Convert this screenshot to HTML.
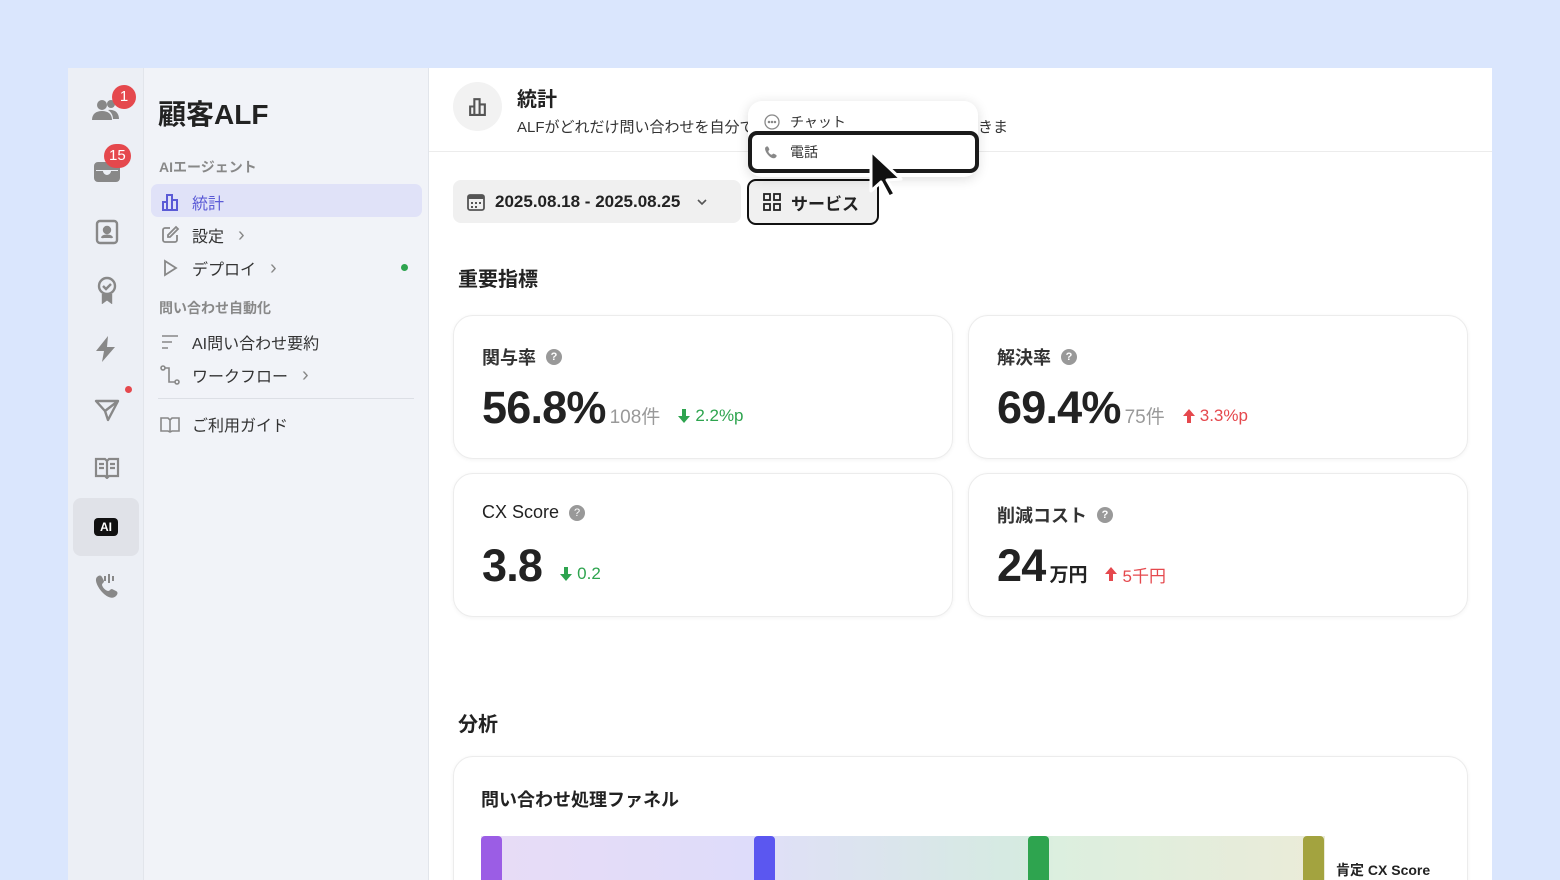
<!DOCTYPE html>
<html><head><meta charset="utf-8"><style>
*{box-sizing:border-box;margin:0;padding:0}
body{width:1560px;height:880px;background:#dae6fd;font-family:"Liberation Sans","Noto Sans CJK JP",sans-serif;color:#222;position:relative;overflow:hidden}
.abs{position:absolute}
.win{left:68px;top:68px;width:1424px;height:812px;background:#fff;overflow:hidden}
.rail{left:0;top:0;width:76px;height:812px;background:#eceff5;border-right:1px solid #e2e5eb}
.side{left:76px;top:0;width:285px;height:812px;background:#f1f3f8;border-right:1px solid #e2e5eb}
.badge{background:#e5484d;color:#fff;font-size:15px;border-radius:12px;height:24px;min-width:24px;text-align:center;line-height:24px;padding:0 5px}
.nav{position:absolute;left:16px;font-size:16px;color:#333;display:flex;align-items:center;gap:12px}
.chev{color:#888;font-size:20px;margin-left:2px;line-height:16px}
.sec{position:absolute;left:15px;font-size:14px;color:#888;font-weight:bold}
.card{position:absolute;background:#fff;border:1px solid #ececec;border-radius:20px;box-shadow:0 1px 4px rgba(0,0,0,.05)}
.lbl{position:absolute;left:28px;top:28px;font-size:18px;font-weight:bold;color:#333;display:flex;align-items:center;gap:10px}
.q{width:16px;height:16px;border-radius:50%;background:#999;color:#fff;font-size:11px;text-align:center;line-height:16px}
.val{position:absolute;left:28px;top:66px;display:flex;align-items:baseline;white-space:nowrap}
.big{font-size:45px;font-weight:bold;color:#222;letter-spacing:-0.8px}
.sub{font-size:19px;color:#999;margin-left:4px}
.g{color:#2ea44f;font-size:17px;margin-left:18px;display:flex;align-items:center;gap:5px}
.r{color:#e5484d;font-size:17px;margin-left:18px;display:flex;align-items:center;gap:5px}
</style></head><body>
<div class="abs win">
 <div class="abs rail">
  <svg class="abs" style="left:24px;top:30px" width="28" height="24" viewBox="0 0 28 24" fill="#888"><circle cx="10" cy="7" r="5"/><path d="M0 22c0-6 4-9 10-9s10 3 10 9z"/><circle cx="19" cy="6" r="4"/><path d="M16 12c6-1 11 2 11 9h-6c0-4-2-7-5-9z"/></svg>
  <div class="abs badge" style="left:44px;top:17px">1</div>
  <svg class="abs" style="left:26px;top:92px" width="26" height="22" viewBox="0 0 26 22" fill="#888"><path d="M4 2h18a4 4 0 0 1 4 4v12a4 4 0 0 1-4 4H4a4 4 0 0 1-4-4V6a4 4 0 0 1 4-4zM2 11h7c0 2 2 4 4 4s4-2 4-4h7v-1H2z"/></svg>
  <div class="abs badge" style="left:36px;top:76px">15</div>
  <svg class="abs" style="left:27px;top:151px" width="24" height="26" viewBox="0 0 24 26" fill="none" stroke="#888" stroke-width="2.4"><rect x="2" y="2" width="20" height="22" rx="3"/><circle cx="12" cy="11" r="3" fill="#888"/><path d="M7 19c1-3 9-3 10 0" fill="#888"/></svg>
  <svg class="abs" style="left:27px;top:208px" width="24" height="28" viewBox="0 0 24 28" fill="none" stroke="#888" stroke-width="2.4"><circle cx="12" cy="10" r="8"/><path d="M8 10l3 3 5-5"/><path d="M8 18v8l4-3 4 3v-8" fill="#888"/></svg>
  <svg class="abs" style="left:28px;top:268px" width="20" height="26" viewBox="0 0 20 26" fill="#888"><path d="M12 0L0 15h8l-2 11 13-15h-8z"/></svg>
  <div class="abs" style="left:57px;top:318px;width:7px;height:7px;border-radius:50%;background:#e5484d"></div>
  <svg class="abs" style="left:26px;top:330px" width="26" height="24" viewBox="0 0 26 24" fill="none" stroke="#888" stroke-width="2.4" stroke-linejoin="round"><path d="M2 3l22 0-10 19-3-9z M11 13l13-10"/></svg>
  <svg class="abs" style="left:26px;top:389px" width="26" height="22" viewBox="0 0 26 22" fill="none" stroke="#888" stroke-width="2.2"><path d="M2 2h9l2 2 2-2h9v17h-9l-2 2-2-2H2z M13 4v17 M5 7h5M5 11h5M16 7h5M16 11h5"/></svg>
  <div class="abs" style="left:5px;top:430px;width:66px;height:58px;border-radius:8px;background:#e0e2e8"></div>
  <div class="abs" style="left:26px;top:450px;width:24px;height:18px;border-radius:4px;background:#111;color:#fff;font-size:12px;font-weight:bold;text-align:center;line-height:18px">AI</div>
  <svg class="abs" style="left:26px;top:505px" width="26" height="26" viewBox="0 0 26 26" fill="#888"><path d="M3 4c2-2 4-2 5 0l2 4c0 2-2 2-2 4 1 3 3 5 6 6 2 0 2-2 4-2l4 2c2 1 2 3 0 5-3 3-8 2-13-3S0 7 3 4z"/><rect x="14" y="1" width="2" height="9"/><rect x="18" y="3" width="2" height="5"/><rect x="10" y="3" width="2" height="5"/></svg>
 </div>
 <div class="abs side">
  <div class="abs" style="left:14px;top:25px;font-size:28px;font-weight:bold;color:#222">顧客ALF</div>
  <div class="sec" style="top:89px">AIエージェント</div>
  <div class="abs" style="left:7px;top:116px;width:271px;height:33px;border-radius:7px;background:#e0e2f8"></div>
  <div class="nav" style="top:122px;color:#5b5bd6"><svg width="20" height="20" viewBox="0 0 20 20" fill="none" stroke="#5b5bd6" stroke-width="2"><path d="M2 18h16M3 18v-8h4v8M7 18V3h5v15M12 18V8h5v10"/></svg>統計</div>
  <div class="nav" style="top:155px"><svg width="20" height="20" viewBox="0 0 20 20" fill="none" stroke="#888" stroke-width="1.8"><path d="M10 3H5a2 2 0 0 0-2 2v10a2 2 0 0 0 2 2h10a2 2 0 0 0 2-2v-5"/><path d="M16 2l2 2-8 8H8v-2z"/></svg>設定<span class="chev">›</span></div>
  <div class="nav" style="top:188px"><svg width="20" height="20" viewBox="0 0 20 20" fill="none" stroke="#888" stroke-width="1.8"><path d="M5 3l11 7-11 7z"/></svg>デプロイ<span class="chev">›</span></div>
  <div class="abs" style="left:257px;top:196px;width:7px;height:7px;border-radius:50%;background:#2ea44f"></div>
  <div class="sec" style="top:230px">問い合わせ自動化</div>
  <div class="nav" style="top:262px"><svg width="20" height="20" viewBox="0 0 20 20" stroke="#888" stroke-width="1.6"><path d="M2 4h16M2 10h10M2 16h6"/></svg>AI問い合わせ要約</div>
  <div class="nav" style="top:295px"><svg width="20" height="20" viewBox="0 0 20 20" fill="none" stroke="#888" stroke-width="1.6"><circle cx="3" cy="3" r="2"/><circle cx="17" cy="17" r="2"/><path d="M5 3h4v14h6"/></svg>ワークフロー<span class="chev">›</span></div>
  <div class="abs" style="left:14px;top:330px;width:256px;height:1px;background:#dcdfe5"></div>
  <div class="nav" style="top:344px"><svg width="20" height="20" viewBox="0 0 20 20" fill="none" stroke="#888" stroke-width="1.6"><path d="M1 4h7l2 2 2-2h7v13h-7l-2 1-2-1H1z M10 6v12"/></svg>ご利用ガイド</div>
 </div>
 <div class="abs" style="left:385px;top:14px;width:49px;height:49px;border-radius:50%;background:#f2f2f2"></div>
 <svg class="abs" style="left:399px;top:28px" width="21" height="21" viewBox="0 0 20 20" fill="none" stroke="#555" stroke-width="2"><path d="M2 18h16M3 18v-8h4v8M7 18V3h5v15M12 18V8h5v10"/></svg>
 <div class="abs" style="left:449px;top:15px;font-size:20px;font-weight:bold">統計</div>
 <div class="abs" style="left:449px;top:48px;font-size:15px;color:#333">ALFがどれだけ問い合わせを自分で解決したか</div>
 <div class="abs" style="left:910px;top:48px;font-size:15px;color:#333">きま</div>
 <div class="abs" style="left:361px;top:83px;width:1063px;height:1px;background:#ececec"></div>
 <div class="abs" style="left:385px;top:112px;width:288px;height:43px;border-radius:8px;background:#f0f0f0;display:flex;align-items:center;padding-left:14px;gap:10px;font-size:17px;font-weight:bold"><svg width="18" height="18" viewBox="0 0 18 18"><rect x="1" y="2" width="16" height="15" rx="2" fill="none" stroke="#555" stroke-width="1.8"/><rect x="1" y="2" width="16" height="4" fill="#555"/><g fill="#555"><rect x="4" y="9" width="2" height="2"/><rect x="8" y="9" width="2" height="2"/><rect x="12" y="9" width="2" height="2"/><rect x="4" y="13" width="2" height="2"/><rect x="8" y="13" width="2" height="2"/></g></svg>2025.08.18 - 2025.08.25 <svg style="margin-left:6px" width="12" height="8" viewBox="0 0 12 8" fill="none" stroke="#555" stroke-width="1.6"><path d="M2 2l4 4 4-4"/></svg></div>
 <div class="abs" style="left:679px;top:111px;width:132px;height:46px;border-radius:9px;background:#f0f0f0;border:2px solid #111;display:flex;align-items:center;padding-left:14px;gap:10px;font-size:17px;font-weight:bold"><svg width="18" height="18" viewBox="0 0 18 18" fill="none" stroke="#222" stroke-width="1.8"><rect x="1" y="1" width="6" height="6"/><rect x="11" y="1" width="6" height="6"/><rect x="1" y="11" width="6" height="6"/><rect x="11" y="11" width="6" height="6"/></svg>サービス</div>
 <div class="abs" style="left:680px;top:33px;width:230px;height:76px;background:#fff;border-radius:14px;box-shadow:0 2px 12px rgba(0,0,0,.14)"></div>
 <div class="abs" style="left:696px;top:44px;font-size:14px;color:#333;display:flex;align-items:center;gap:10px"><svg width="16" height="16" viewBox="0 0 16 16" fill="none" stroke="#888" stroke-width="1.3"><circle cx="8" cy="8" r="7"/><circle cx="5" cy="8" r=".6" fill="#888"/><circle cx="8" cy="8" r=".6" fill="#888"/><circle cx="11" cy="8" r=".6" fill="#888"/></svg>チャット</div>
 <div class="abs" style="left:680px;top:63px;width:231px;height:42px;border:4px solid #1a1a1a;border-radius:9px;background:#fff"></div>
 <div class="abs" style="left:696px;top:74px;font-size:14px;color:#333;display:flex;align-items:center;gap:12px"><svg width="14" height="14" viewBox="0 0 26 26" fill="#888"><path d="M3 4c2-2 4-2 5 0l2 4c0 2-2 2-2 4 1 3 3 5 6 6 2 0 2-2 4-2l4 2c2 1 2 3 0 5-3 3-8 2-13-3S0 7 3 4z"/></svg>電話</div>
 <svg class="abs" style="left:800px;top:80px" width="40" height="52" viewBox="0 0 40 52"><path d="M3 3v40l10-9 8 15 6-3-8-14 14-1z" fill="#111" stroke="#fff" stroke-width="3" stroke-linejoin="round"/></svg>
 <div class="abs" style="left:390px;top:195px;font-size:20px;font-weight:bold">重要指標</div>
 <div class="card" style="left:385px;top:247px;width:500px;height:144px"><div class="lbl">関与率<span class="q">?</span></div><div class="val"><span class="big">56.8%</span><span class="sub">108件</span><span class="g"><svg width="12" height="14" viewBox="0 0 12 14" fill="#2ea44f"><path d="M4 0h4v7h4l-6 7-6-7h4z"/></svg>2.2%p</span></div></div>
 <div class="card" style="left:900px;top:247px;width:500px;height:144px"><div class="lbl">解決率<span class="q">?</span></div><div class="val"><span class="big">69.4%</span><span class="sub">75件</span><span class="r"><svg width="12" height="14" viewBox="0 0 12 14" fill="#e5484d"><path d="M4 14h4V7h4L6 0 0 7h4z"/></svg>3.3%p</span></div></div>
 <div class="card" style="left:385px;top:405px;width:500px;height:144px"><div class="lbl" style="font-weight:normal;color:#222">CX Score<span class="q">?</span></div><div class="val"><span class="big">3.8</span><span class="g"><svg width="12" height="14" viewBox="0 0 12 14" fill="#2ea44f"><path d="M4 0h4v7h4l-6 7-6-7h4z"/></svg>0.2</span></div></div>
 <div class="card" style="left:900px;top:405px;width:500px;height:144px"><div class="lbl">削減コスト<span class="q">?</span></div><div class="val"><span class="big">24</span><span style="font-size:19px;font-weight:bold;margin-left:4px">万円</span><span class="r"><svg width="12" height="14" viewBox="0 0 12 14" fill="#e5484d"><path d="M4 14h4V7h4L6 0 0 7h4z"/></svg>5千円</span></div></div>
 <div class="abs" style="left:390px;top:640px;font-size:20px;font-weight:bold">分析</div>
 <div class="card" style="left:385px;top:688px;width:1015px;height:150px"></div>
 <div class="abs" style="left:413px;top:718px;font-size:18px;font-weight:bold">問い合わせ処理ファネル</div>
 <div class="abs" style="left:413px;top:768px;width:844px;height:50px;background:linear-gradient(90deg,#e8dcf6 0%,#dedcfa 32%,#dfe0f6 35%,#d5ebe0 65%,#dcefdf 68%,#ebebd8 100%)"></div>
 <div class="abs" style="left:413px;top:768px;width:21px;height:50px;border-radius:4px 4px 0 0;background:#9b5de5"></div>
 <div class="abs" style="left:686px;top:768px;width:21px;height:50px;border-radius:4px 4px 0 0;background:#5b57f0"></div>
 <div class="abs" style="left:960px;top:768px;width:21px;height:50px;border-radius:4px 4px 0 0;background:#2ea44f"></div>
 <div class="abs" style="left:1235px;top:768px;width:21px;height:50px;border-radius:4px 4px 0 0;background:#a3a33f"></div>
 <div class="abs" style="left:1268px;top:792px;font-size:14px;font-weight:bold">肯定 CX Score</div>
</div>
</body></html>
